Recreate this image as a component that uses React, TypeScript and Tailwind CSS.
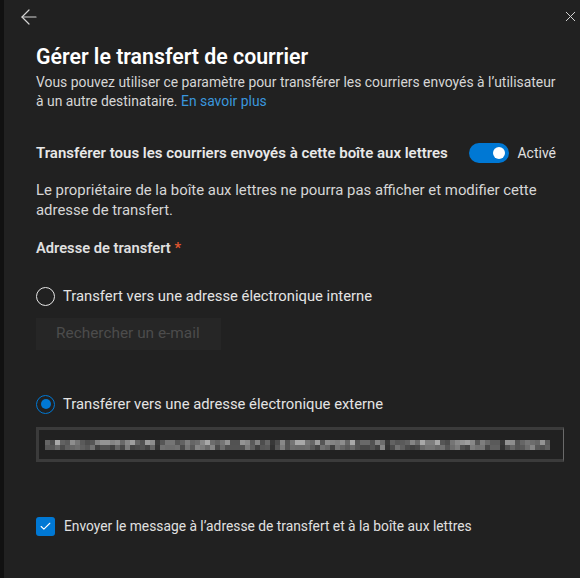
import React, { useState } from "react";
import { ArrowLeft, X, Check } from "lucide-react";

// pixelated e-mail value, as seen in the screenshot
const mosaicShades = [
  "#6a6a6a", "#8a8a8a", "#5a5a5a", "#9a9a9a", "#7a7a7a", "#555555", "#b0b0b0", "#6e6e6e",
  "#848484", "#5e5e5e", "#a4a4a4", "#727272", "#505050", "#949494", "#666666", "#8e8e8e",
];

const Mosaic: React.FC = () => {
  const cols = 101;
  const rects = [];
  for (let r = 0; r < 2; r++) {
    for (let c = 0; c < cols; c++) {
      const seed = (c * 37 + r * 91 + ((c * c) % 13) * 7) % mosaicShades.length;
      const gap = c % 23 === 22;
      rects.push(
        <rect
          key={`${r}-${c}`}
          x={c * 5}
          y={r * 5}
          width={5}
          height={5}
          fill={gap ? "#3a3a3a" : mosaicShades[seed]}
          opacity={r === 1 ? 0.7 : 0.95}
        />
      );
    }
  }
  return (
    <svg width={505} height={10} viewBox="0 0 505 10" className="block">
      {rects}
    </svg>
  );
};

const App: React.FC = () => {
  const [forwardOn, setForwardOn] = useState(true);
  const [target, setTarget] = useState<"internal" | "external">("external");
  const [keepCopy, setKeepCopy] = useState(true);

  return (
    <div
      className="w-[580px] h-[578px] flex bg-[#111111] overflow-hidden"
      style={{ fontFamily: "Roboto, 'Open Sans', sans-serif" }}
    >
      {/* left edge of the page behind the panel */}
      <div className="w-[4px] shrink-0" />

      <div className="flex-1 bg-[#212121] text-[#d6d6d6] text-[14px] flex flex-col">
        {/* Header */}
        <div className="flex items-center justify-between h-[34px] pl-[13px] pr-[1px]">
          <ArrowLeft size={24} strokeWidth={1.2} className="text-[#d4d4d4]" />
          <X size={17} strokeWidth={1.4} className="text-[#d4d4d4] -mt-[1px]" />
        </div>

        <div className="pl-[32px] pr-[16px] flex flex-col">
          {/* Title */}
          <h1 className="mt-[9px] text-[21.3px] leading-[28px] font-semibold text-white">
            Gérer le transfert de courrier
          </h1>
          <p className="mt-[2px] leading-[19px] text-[13.9px] text-[#d6d6d6]">
            Vous pouvez utiliser ce paramètre pour transférer les courriers envoyés à l’utilisateur
            <br />à un autre destinataire.{" "}
            <a className="text-[#3a96dd]">En savoir plus</a>
          </p>

          {/* Toggle row */}
          <div className="mt-[31px] flex items-center justify-between pr-[8px] h-[22px]">
            <span className="font-semibold text-[#e8e8e8] text-[15px] whitespace-nowrap">
              Transférer tous les courriers envoyés à cette boîte aux lettres
            </span>
            <div className="flex items-center gap-[8px]">
              <button
                onClick={() => setForwardOn(!forwardOn)}
                className={`w-[40px] h-[20px] rounded-full flex items-center px-[4px] ${
                  forwardOn ? "bg-[#0078d4] justify-end" : "bg-transparent border border-[#aaa] justify-start"
                }`}
              >
                <span className="w-[12px] h-[12px] rounded-full bg-white" />
              </button>
              <span className="text-[14px] text-[#e0e0e0]">Activé</span>
            </div>
          </div>

          <p className="mt-[16px] leading-[20px] text-[14.9px] text-[#d6d6d6] whitespace-nowrap">
            Le propriétaire de la boîte aux lettres ne pourra pas afficher et modifier cette
            <br />
            adresse de transfert.
          </p>

          <div className="mt-[18px] leading-[20px] text-[14.7px] font-semibold text-[#e0e0e0]">
            Adresse de transfert <span className="text-[#e0562f]">*</span>
          </div>

          {/* Internal */}
          <label
            className="mt-[28px] flex items-center gap-[8px] h-[20px] cursor-pointer"
            onClick={() => setTarget("internal")}
          >
            <span
              className={`w-[19px] h-[19px] rounded-full border-[1.5px] flex items-center justify-center ${
                target === "internal" ? "border-[#0078d4]" : "border-[#e6e6e6]"
              }`}
            >
              {target === "internal" && <span className="w-[10px] h-[10px] rounded-full bg-[#0078d4]" />}
            </span>
            <span className="text-[14.8px] text-[#e4e4e4]">Transfert vers une adresse électronique interne</span>
          </label>
          <div className="mt-[12px] w-[185px] h-[32px] bg-[#262626] flex items-center pl-[20px] text-[15.4px] text-[#4c4c4c]">
            Rechercher un e-mail
          </div>

          {/* External */}
          <label
            className="mt-[44px] flex items-center gap-[8px] h-[20px] cursor-pointer"
            onClick={() => setTarget("external")}
          >
            <span
              className={`w-[19px] h-[19px] rounded-full border-[1.5px] flex items-center justify-center ${
                target === "external" ? "border-[#0078d4]" : "border-[#e6e6e6]"
              }`}
            >
              {target === "external" && <span className="w-[10px] h-[10px] rounded-full bg-[#0078d4]" />}
            </span>
            <span className="text-[14.8px] text-[#e4e4e4]">Transférer vers une adresse électronique externe</span>
          </label>
          <div className="mt-[13px] h-[35px] border-[3px] border-[#3b3b3b] border-r-[#6a6a6a] border-r-[1px] flex items-center pl-[6px] overflow-hidden">
            <Mosaic />
          </div>

          {/* Checkbox */}
          <label
            className="mt-[54px] flex items-center gap-[9px] cursor-pointer"
            onClick={() => setKeepCopy(!keepCopy)}
          >
            <span
              className={`w-[19px] h-[19px] rounded-[3px] flex items-center justify-center ${
                keepCopy ? "bg-[#0078d4]" : "border border-[#ccc]"
              }`}
            >
              {keepCopy && <Check size={13} strokeWidth={2} className="text-white" />}
            </span>
            <span className="text-[13.8px] text-[#e0e0e0]">
              Envoyer le message à l’adresse de transfert et à la boîte aux lettres
            </span>
          </label>
        </div>
      </div>
    </div>
  );
};

export default App;
